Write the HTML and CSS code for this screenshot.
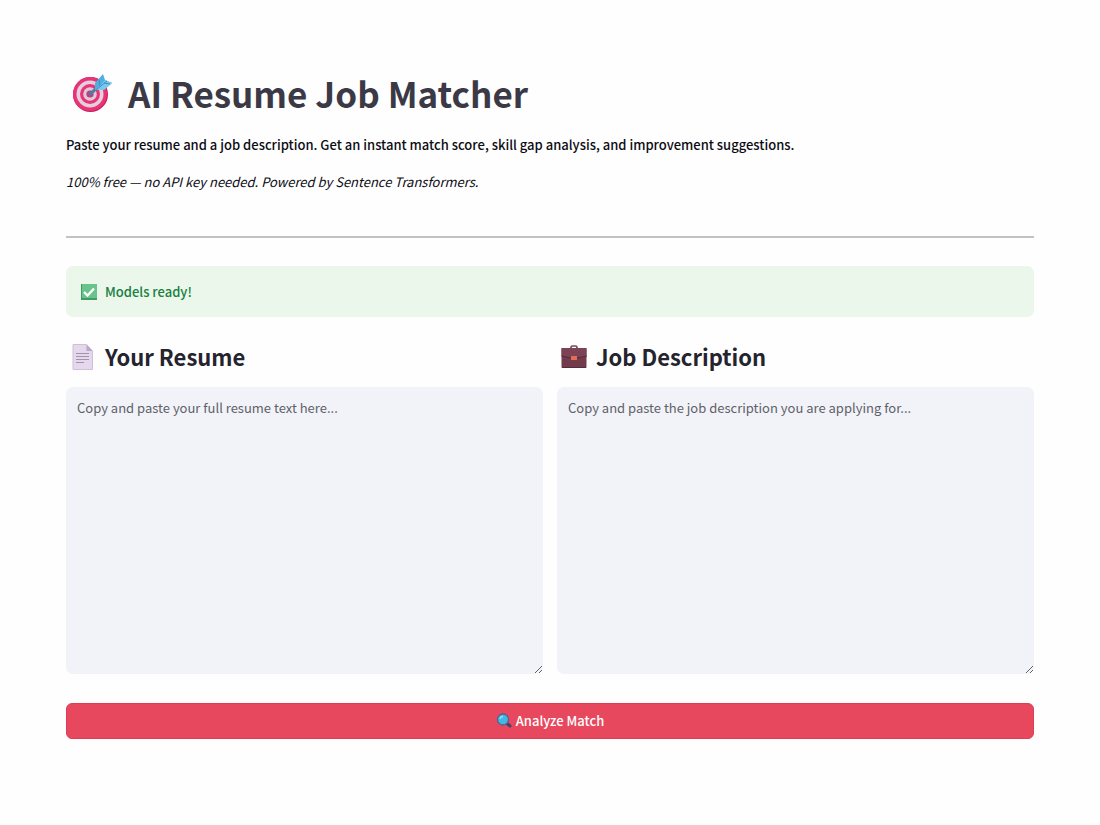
FILE: index.html
```html
<!DOCTYPE html>
<html lang="en">
<head>
<meta charset="utf-8">
<meta name="viewport" content="width=device-width, initial-scale=1">
<title>AI Resume Job Matcher</title>
<link rel="stylesheet" href="styles.css">
</head>
<body>
<main class="page">
  <header class="intro">
    <h1 class="title">
      <svg class="title-icon" viewBox="0 0 42 42" aria-hidden="true">
        <circle cx="18.500" cy="22.500" r="17.500" fill="#c91d5c"/>
        <circle cx="18" cy="22" r="17" fill="#e83475"/>
        <circle cx="18" cy="22" r="13.500" fill="#e4cfe0"/>
        <circle cx="18" cy="22" r="10" fill="#e83475"/>
        <circle cx="18" cy="22" r="6.800" fill="#dfc8dc"/>
        <circle cx="18" cy="22" r="3.600" fill="#bd3f78"/>
        <path d="M18 22L31 11" stroke="#547a9f" stroke-width="3" stroke-linecap="round"/>
        <path d="M23 18L23 11L31 2L33 8L40 11L32 18Z" fill="#50aee0"/>
        <path d="M24 18L33 8L40 11L32 18Z" fill="#79c8ed"/>
        <path d="M24 18L35 9M28 14L27 8M32 11L38 12" stroke="#3d8fc0" fill="none"/>
      </svg>
      <span>AI Resume Job Matcher</span>
    </h1>
    <p class="lead">Paste your resume and a job description. Get an instant match score, skill gap analysis, and improvement suggestions.</p>
    <p class="note">100% free — no API key needed. Powered by Sentence Transformers.</p>
  </header>
  <hr class="divider">
  <div class="status" role="status">
    <svg class="small-icon" viewBox="0 0 16 16" aria-hidden="true">
      <rect width="16" height="16" fill="#3f9c68"/>
      <rect x="1" width="15" height="14" fill="#68c48b"/>
      <path d="M3 8L6.500 11.500L13 4.500" fill="none" stroke="#fff" stroke-width="2.300"/>
    </svg>
    <span>Models ready!</span>
  </div>
  <form class="form">
    <div class="columns">
      <section class="field">
        <h2 class="heading">
          <svg class="heading-icon" viewBox="0 0 26 26" aria-hidden="true">
            <path d="M3 .5H16.500L22.500 7V25.500H3Z" fill="#e5d8ec" stroke="#cfc0d8"/>
            <path d="M16.500 .5V7H22.500Z" fill="#b9a7c4"/>
            <path d="M6 9.500H19M6 12.500H19M6 15.500H19M6 18.500H14" stroke="#a294aa" stroke-width="1.200"/>
          </svg>
          <label for="resume">Your Resume</label>
        </h2>
        <textarea class="text-box" id="resume" placeholder="Copy and paste your full resume text here..."></textarea>
      </section>
      <section class="field">
        <h2 class="heading">
          <svg class="heading-icon" viewBox="0 0 26 26" aria-hidden="true">
            <path d="M10 4V3.500Q10 2 11.500 2H14.500Q16 2 16 3.500V4" fill="none" stroke="#7d4557" stroke-width="1.700"/>
            <rect x=".5" y="4" width="25" height="20" rx="1" fill="#713b4c"/>
            <path d="M.5 4H25.500V13L16 14H10L.5 12Z" fill="#7c4354"/>
            <path d="M.5 12L10 14H16L25.500 12M1 23.500H25" fill="none" stroke="#562b3b"/>
            <rect x="10" y="12" width="6" height="4" rx=".5" fill="#e16e51"/>
          </svg>
          <label for="job">Job Description</label>
        </h2>
        <textarea class="text-box" id="job" placeholder="Copy and paste the job description you are applying for..."></textarea>
      </section>
    </div>
    <button class="submit" type="button">
      <svg class="button-icon" viewBox="0 0 16 16" aria-hidden="true">
        <path d="M10.500 10L14 13" stroke="#4b416f" stroke-width="3" stroke-linecap="round"/>
        <circle cx="7" cy="6.500" r="5.500" fill="#42b9e5" stroke="#56608f" stroke-width="1.300"/>
        <path d="M4 6Q4.500 3.500 7 3.500" fill="none" stroke="#8be0f5" stroke-width="1.300"/>
      </svg>
      <span>Analyze Match</span>
    </button>
  </form>
</main>
</body>
</html>
```
FILE: styles.css
```css
* { box-sizing: border-box; }
body {
  margin: 0;
  background: #fefefe;
  color: #0c0c14;
  font-family: "Source Sans Pro", "Noto Sans CJK JP", sans-serif;
  font-size: 13px;
  line-height: 24px;
}
h1, h2, p { margin: 0; }
.page { padding: 67px 66px 80px; }
.title {
  display: flex;
  align-items: center;
  gap: 14px;
  padding-left: 6px;
  color: #3c3946;
  font-size: 35px;
  font-weight: 700;
  line-height: 52px;
}
.title-icon { width: 42px; height: 42px; flex: none; }
.lead { margin-top: 14px; font-weight: 500; }
.note { margin-top: 13px; font-style: italic; }
.divider { margin: 42px 0 28px; border: 0; border-top: 2px solid #c2c2c5; }
.status {
  display: flex;
  align-items: center;
  gap: 8px;
  padding: 14px 15px;
  border-radius: 7px;
  background: #eaf7ea;
  color: #188040;
  font-weight: 500;
  line-height: 23px;
}
.small-icon { width: 16px; height: 16px; flex: none; }
.columns { display: grid; grid-template-columns: 1fr 1fr; gap: 14px; margin-top: 20px; }
.field { display: flex; flex-direction: column; gap: 11px; min-width: 0; }
.heading {
  display: flex;
  align-items: center;
  gap: 9px;
  padding-left: 4px;
  color: #24232e;
  font-size: 22px;
  font-weight: 700;
  line-height: 39px;
}
.heading-icon { width: 26px; height: 26px; flex: none; }
.text-box {
  display: block;
  width: 100%;
  height: 287px;
  padding: 9px 11px;
  border: 0;
  border-radius: 7px;
  background: #f2f3f9;
  color: #24232e;
  font: inherit;
  resize: vertical;
}
.text-box::placeholder { color: #606167; opacity: 1; }
.submit {
  display: flex;
  align-items: center;
  justify-content: center;
  gap: 4px;
  width: 100%;
  margin-top: 29px;
  padding: 5px 12px;
  border: 1px solid #df3c55;
  border-radius: 6px;
  background: #e7485e;
  color: #fff;
  font: inherit;
  font-weight: 500;
}
.button-icon { width: 16px; height: 16px; flex: none; }
```
